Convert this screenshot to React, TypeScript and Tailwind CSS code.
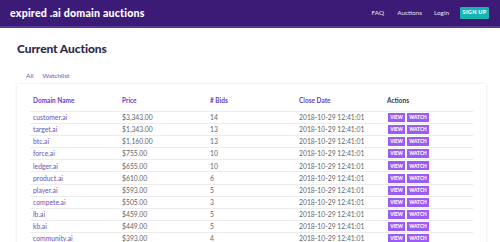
import React from "react";

const rows = [
  ["customer.ai", "$3,343.00", "14"],
  ["target.ai", "$1,343.00", "13"],
  ["btc.ai", "$1,160.00", "13"],
  ["force.ai", "$755.00", "10"],
  ["ledger.ai", "$655.00", "10"],
  ["product.ai", "$610.00", "6"],
  ["player.ai", "$593.00", "5"],
  ["compete.ai", "$505.00", "3"],
  ["lb.ai", "$459.00", "5"],
  ["kb.ai", "$449.00", "5"],
  ["community.ai", "$393.00", "4"],
];

export default function App() {
  return (
    <div className="w-[500px] h-[242px] overflow-hidden bg-white" style={{ fontFamily: "Lato, 'Open Sans', sans-serif" }}>
      <header className="h-[28px] bg-[#3c1b77] border-b-2 border-[#5a3a98] flex items-center justify-between pl-[10px] pr-[11px]">
        <div className="text-white font-black text-[10.6px] tracking-[0.2px] leading-none">expired .ai domain auctions</div>
        <nav className="flex items-center text-[6.4px] text-[#e6e0f2] leading-none">
          <span className="mr-[13px]">FAQ</span>
          <span className="mr-[12px]">Auctions</span>
          <span className="mr-[11px]">Login</span>
          <span className="bg-[#18b4b4] text-white font-black text-[5.5px] tracking-[0.3px] w-[29px] h-[12px] flex items-center justify-center rounded-[1px] shadow-sm">SIGN UP</span>
        </nav>
      </header>
      <div className="pl-[17px] pr-[14px]">
        <h1 className="mt-[15px] text-[12px] font-black text-[#30294a] leading-none tracking-[-0.1px]">Current Auctions</h1>
        <div className="mt-[16px] flex text-[6.5px] text-[#6a52b8] leading-none">
          <span className="pl-[9px] pr-[9px] pt-[2px] pb-[3px] bg-white">All</span>
          <span className="pt-[2px] pb-[3px]">Watchlist</span>
        </div>
        <div className="mt-[1px] bg-white shadow-[0_0_3px_rgba(0,0,0,0.12)] pt-[8px] px-[13px] h-[200px]">
          <table className="w-full border-collapse text-[6.8px] leading-none">
            <thead>
              <tr className="h-[20px] border-b border-[#ececec]">
                <th className="text-left font-bold text-[#6a3cc8] pl-[3px] w-[92px] text-[6.5px]">Domain Name</th>
                <th className="text-left font-bold text-[#6a3cc8] w-[88px] text-[6.5px]">Price</th>
                <th className="text-left font-bold text-[#6a3cc8] w-[89px] text-[6.5px]">#&nbsp;Bids</th>
                <th className="text-left font-bold text-[#6a3cc8] w-[88px] text-[6.5px]">Close Date</th>
                <th className="text-left font-bold text-[#3b3b48] text-[6.5px]">Actions</th>
              </tr>
            </thead>
            <tbody>
              {rows.map((r) => (
                <tr key={r[0]} className="h-[12.1px] border-b border-[#ececec]">
                  <td className="pl-[3px] text-[#6b52b8]">{r[0]}</td>
                  <td className="text-[#666]">{r[1]}</td>
                  <td className="text-[#666]">{r[2]}</td>
                  <td className="text-[#666]">2018-10-29 12:41:01</td>
                  <td>
                    <div className="flex gap-[2px] pl-[1px]">
                      <span className="bg-[#9b5cf6] text-white font-black text-[4.8px] h-[9px] w-[17px] flex items-center justify-center">VIEW</span>
                      <span className="bg-[#9b5cf6] text-white font-black text-[4.8px] h-[9px] w-[22px] flex items-center justify-center">WATCH</span>
                    </div>
                  </td>
                </tr>
              ))}
            </tbody>
          </table>
        </div>
      </div>
    </div>
  );
}
